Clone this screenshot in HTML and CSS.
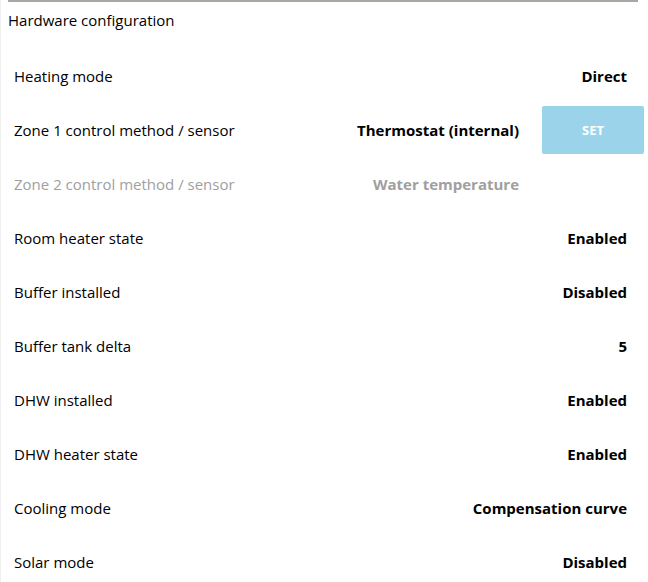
FILE: index.html
```html
<!DOCTYPE html>
<html>
<head>
<meta charset="utf-8">
<link rel="stylesheet" href="styles.css">
</head>
<body>
<div class="page">
  <section class="section">
    <h2 class="title">Hardware configuration</h2>
    <div class="row"><span class="label">Heating mode</span><span class="value">Direct</span></div>
    <div class="row"><span class="label">Zone 1 control method / sensor</span><span class="value">Thermostat (internal)</span><button class="action">SET</button></div>
    <div class="row disabled"><span class="label">Zone 2 control method / sensor</span><span class="value">Water temperature</span><span class="action placeholder"></span></div>
    <div class="row"><span class="label">Room heater state</span><span class="value">Enabled</span></div>
    <div class="row"><span class="label">Buffer installed</span><span class="value">Disabled</span></div>
    <div class="row"><span class="label">Buffer tank delta</span><span class="value">5</span></div>
    <div class="row"><span class="label">DHW installed</span><span class="value">Enabled</span></div>
    <div class="row"><span class="label">DHW heater state</span><span class="value">Enabled</span></div>
    <div class="row"><span class="label">Cooling mode</span><span class="value">Compensation curve</span></div>
    <div class="row"><span class="label">Solar mode</span><span class="value">Disabled</span></div>
  </section>
</div>
</body>
</html>
```

FILE: styles.css
```css
html, body {
  margin: 0;
  padding: 0;
  background: #ffffff;
}
body {
  font-family: "Open Sans", "Noto Sans", sans-serif;
  font-size: 15px;
  color: #000000;
}
.page {
  border-left: 1px solid #efefef;
  min-height: 582px;
  padding-left: 7px;
  box-sizing: border-box;
}
.section {
  width: 630px;
  border-top: 2px solid #aaa6a2;
}
.title {
  margin: 0;
  padding: 8px 0 19px 0;
  font-size: 15px;
  font-weight: 400;
  line-height: 20px;
}
.row {
  display: flex;
  align-items: center;
  height: 54px;
  padding: 0 17px 0 6px;
  margin-right: -6px;
}
.label {
  flex: 1;
}
.value {
  font-weight: 700;
}
.action {
  flex: none;
  width: 102px;
  height: 48px;
  margin-left: 23px;
  margin-right: -17px;
  border: none;
  border-radius: 2px;
  background: #9bd3ea;
  color: #ffffff;
  font-family: inherit;
  font-size: 13px;
  font-weight: 700;
  padding: 0;
}
.placeholder {
  visibility: hidden;
}
.disabled {
  color: #a0a0a0;
}
```
